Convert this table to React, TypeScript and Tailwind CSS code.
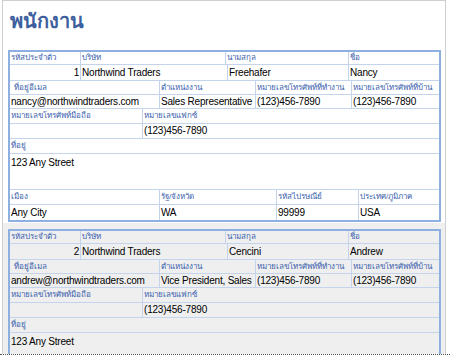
import React from 'react';

type Cell = { w: number; text: string; right?: boolean; indent?: boolean };
type Row = { h: number; label?: boolean; cells: Cell[] };

type Employee = {
    id: string;
    company: string;
    last: string;
    first: string;
    email: string;
    title: string;
    work: string;
    home: string;
    mobile: string;
    fax: string;
    address: string;
    city: string;
    state: string;
    zip: string;
    country: string;
};

const employees: Employee[] = [
    {
        id: '1', company: 'Northwind Traders', last: 'Freehafer', first: 'Nancy',
        email: 'nancy@northwindtraders.com', title: 'Sales Representative',
        work: '(123)456-7890', home: '(123)456-7890', mobile: '', fax: '(123)456-7890',
        address: '123 Any Street', city: 'Any City', state: 'WA', zip: '99999', country: 'USA',
    },
    {
        id: '2', company: 'Northwind Traders', last: 'Cencini', first: 'Andrew',
        email: 'andrew@northwindtraders.com', title: 'Vice President, Sales',
        work: '(123)456-7890', home: '(123)456-7890', mobile: '', fax: '(123)456-7890',
        address: '123 Any Street', city: 'Any City', state: 'WA', zip: '99999', country: 'USA',
    },
];

// column widths per line of the form, measured from the screenshot
const rowsFor = (e: Employee): Row[] => [
    {h: 13, label: true, cells: [{w: 71, text: 'รหัสประจำตัว'}, {w: 145, text: 'บริษัท'}, {w: 123, text: 'นามสกุล'}, {w: 90, text: 'ชื่อ'}]},
    {h: 16, cells: [{w: 71, text: e.id, right: true}, {w: 147, text: e.company}, {w: 121, text: e.last}, {w: 90, text: e.first}]},
    {h: 14, label: true, cells: [{w: 150, text: 'ที่อยู่อีเมล', indent: true}, {w: 96, text: 'ตำแหน่งงาน'}, {w: 96, text: 'หมายเลขโทรศัพท์ที่ทำงาน'}, {w: 87, text: 'หมายเลขโทรศัพท์ที่บ้าน'}]},
    {h: 14, cells: [{w: 150, text: e.email}, {w: 96, text: e.title}, {w: 96, text: e.work}, {w: 87, text: e.home}]},
    {h: 15, label: true, cells: [{w: 133, text: 'หมายเลขโทรศัพท์มือถือ'}, {w: 296, text: 'หมายเลขแฟกซ์'}]},
    {h: 15, cells: [{w: 133, text: e.mobile}, {w: 296, text: e.fax}]},
    {h: 15, label: true, cells: [{w: 429, text: 'ที่อยู่'}]},
    {h: 36, cells: [{w: 429, text: e.address}]},
    {h: 15, label: true, cells: [{w: 150, text: 'เมือง'}, {w: 117, text: 'รัฐ/จังหวัด'}, {w: 82, text: 'รหัสไปรษณีย์'}, {w: 80, text: 'ประเทศ/ภูมิภาค'}]},
    {h: 15, cells: [{w: 150, text: e.city}, {w: 117, text: e.state}, {w: 82, text: e.zip}, {w: 80, text: e.country}]},
];

// rows: how many form lines fit before the window cuts the record off
function EmployeeCard({employee, rows = 10}: { employee: Employee; rows?: number }) {
    return (
        <div className="w-[433px] border-2 border-[#8eb0e0]">
            {rowsFor(employee).slice(0, rows).map((row, i) => (
                <div key={i} className="flex border-b border-[#c3d4ec] last:border-b-0" style={{height: row.h}}>
                    {row.cells.map((cell, j) => (
                        <div
                            key={j}
                            style={{width: cell.w}}
                            className={[
                                'shrink-0 flex overflow-hidden whitespace-nowrap border-r border-[#c3d4ec] last:border-r-0 leading-none',
                                row.h > 20 ? 'items-start pt-[4px]' : 'items-center',
                                row.label
                                    ? 'text-[8px] text-[#3a62ad]'
                                    : 'text-[10px] tracking-[-0.2px] text-black',
                                cell.right ? 'justify-end pr-[1px]' : 'pl-[1px]',
                                cell.indent ? 'pl-[4px]' : '',
                            ].join(' ')}
                        >
                            {cell.text}
                        </div>
                    ))}
                </div>
            ))}
        </div>
    );
}

export default function App() {
    return (
        <div className="w-[450px] h-[357px] overflow-hidden bg-white" style={{fontFamily: '"Liberation Sans", "Noto Sans", Tahoma, sans-serif'}}>
            <div className="ml-[2px] w-[444px] h-[354px] overflow-hidden border-t border-x border-[#cfcfcf]">
                {/* Form header */}
                <div className="h-[43px] pl-[7px] pt-[10px]">
                    <h1 className="text-[20px] font-bold leading-none text-[#3e5f9e]">พนักงาน</h1>
                </div>
                {/* Record 1 */}
                <div className="pl-[5px] pt-[6px] pb-[1px] bg-white">
                    <EmployeeCard employee={employees[0]}/>
                </div>
                {/* Record 2 (current) */}
                <div className="pl-[5px] pt-[6px] bg-[#efefef] h-[200px]">
                    <EmployeeCard employee={employees[1]} rows={8}/>
                </div>
            </div>
            <div className="w-full border-t border-dotted border-[#555]"/>
        </div>
    );
}
